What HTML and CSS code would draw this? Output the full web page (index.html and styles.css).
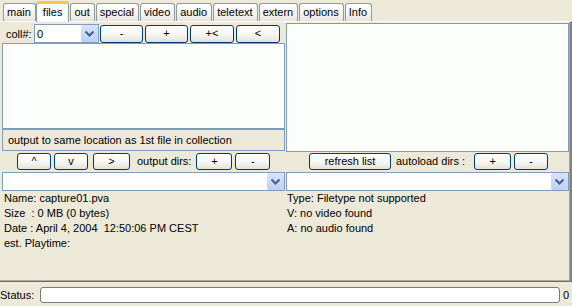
FILE: index.html
```html
<!DOCTYPE html>
<html>
<head>
<link rel="stylesheet" href="styles.css">
</head>
<body>
<div class="tabs">
	<span class="tab">main</span>
	<span class="tab active">files</span>
	<span class="tab">out</span>
	<span class="tab">special</span>
	<span class="tab">video</span>
	<span class="tab">audio</span>
	<span class="tab">teletext</span>
	<span class="tab">extern</span>
	<span class="tab">options</span>
	<span class="tab">Info</span>
</div>
<div class="panel">
	<div class="grid">
		<div class="left-top">
			<div class="toolbar">
				<span class="coll">coll#:</span>
				<div class="combo combo-coll">
					<span class="val">0</span>
					<span class="drop"><svg width="17" height="17" viewBox="0 0 17 17"><path d="M4.5 6.5 L8.5 10.5 L12.5 6.5" fill="none" stroke="#4D6185" stroke-width="2.2"/></svg></span>
				</div>
				<button class="btn b-min">-</button>
				<button class="btn b-plus">+</button>
				<button class="btn b-pl">+&lt;</button>
				<button class="btn b-lt">&lt;</button>
			</div>
			<div class="list list-left"></div>
			<div class="note">output to same location as 1st file in collection</div>
		</div>
		<div class="list list-right"></div>

		<div class="btnrow row-left">
			<button class="btn b-up">^</button>
			<button class="btn b-down">v</button>
			<button class="btn b-gt">&gt;</button>
			<span class="txt t-out">output dirs:</span>
			<button class="btn b-add">+</button>
			<button class="btn b-del">-</button>
		</div>
		<div class="btnrow row-right">
			<button class="btn b-refresh">refresh list</button>
			<span class="txt t-auto">autoload dirs :</span>
			<button class="btn b-add2">+</button>
			<button class="btn b-del2">-</button>
		</div>

		<div class="combo">
			<span class="val"></span>
			<span class="drop"><svg width="17" height="17" viewBox="0 0 17 17"><path d="M4.5 6.5 L8.5 10.5 L12.5 6.5" fill="none" stroke="#4D6185" stroke-width="2.2"/></svg></span>
		</div>
		<div class="combo">
			<span class="val"></span>
			<span class="drop"><svg width="17" height="17" viewBox="0 0 17 17"><path d="M4.5 6.5 L8.5 10.5 L12.5 6.5" fill="none" stroke="#4D6185" stroke-width="2.2"/></svg></span>
		</div>

		<div class="info info-left">
			<div>Name: capture01.pva</div>
			<div>Size&nbsp; : 0 MB (0 bytes)</div>
			<div>Date : April 4, 2004&nbsp; 12:50:06 PM CEST</div>
			<div>est. Playtime:</div>
		</div>
		<div class="info info-right">
			<div>Type: Filetype not supported</div>
			<div>V: no video found</div>
			<div>A: no audio found</div>
		</div>
	</div>
</div>
<div class="status">
	<span class="status-lbl">Status:</span>
	<div class="status-box"></div>
	<span class="status-num">0</span>
</div>
</body>
</html>
```

FILE: styles.css
```css
body {
	margin: 0;
	width: 572px;
	height: 306px;
	background: #ECE9D8;
	font-family: "Liberation Sans", Arial, sans-serif;
	font-size: 11px;
	color: #000;
	overflow: hidden;
}
/* tab strip */
.tabs {
	display: flex;
	align-items: flex-end;
	height: 21px;
	padding-left: 3px;
}
.tab {
	box-sizing: border-box;
	height: 18px;
	padding: 0 4px 0 3px;
	margin-right: 1px;
	line-height: 17px;
	border: 1px solid #919B9C;
	border-bottom: none;
	border-radius: 3px 3px 0 0;
	background: linear-gradient(#FEFEFE, #F4F3EE 60%, #E6E4DA);
}
.tab.active {
	position: relative;
	z-index: 1;
	height: 21px;
	margin-bottom: -1px;
	padding: 0 6px;
	margin-left: -1px;
	line-height: 17px;
	border-top: 3px solid #FFC83C;
	background: #FCFCFE;
}
.panel {
	box-sizing: border-box;
	height: 261px;
	border-top: 1px solid #FFFFFF;
	border-right: 2px solid #808080;
	border-bottom: 1px solid #716F64;
	box-shadow: inset -1px 0 #ACA899, inset 0 -1px #ACA899;
	padding: 1px 0 0 2px;
}
.grid {
	display: grid;
	grid-template-columns: 283px 283px;
	grid-template-rows: 129px 20px 19px auto;
	column-gap: 1px;
}
.left-top {
	display: flex;
	flex-direction: column;
}
.toolbar {
	display: flex;
	align-items: center;
	height: 19px;
	margin-top: 1px;
}
.coll {
	width: 32px;
	padding-left: 4px;
	box-sizing: border-box;
}
.list {
	box-sizing: border-box;
	border: 1px solid #7F9DB9;
	background: #FCFEFC;
}
.list-left {
	height: 86px;
}
.note {
	box-sizing: border-box;
	height: 22px;
	border: 1px solid #7F9DB9;
	padding-left: 5px;
	line-height: 20px;
}
/* combos */
.combo {
	box-sizing: border-box;
	display: flex;
	align-items: center;
	height: 19px;
	border: 1px solid #7F9DB9;
	background: #FFFFFF;
}
.combo .val {
	flex: 1;
	padding-left: 2px;
}
.combo .drop {
	width: 17px;
	height: 17px;
	border-radius: 2px;
	background: linear-gradient(#D8E4FC, #BCCFF8);
}
.combo .drop svg {
	display: block;
}
.combo-coll {
	width: 65px;
	margin-right: 1px;
}
/* buttons */
.btn {
	box-sizing: border-box;
	height: 18px;
	padding: 0;
	border: 1px solid #003C74;
	border-radius: 3px;
	background: linear-gradient(#FFFFFF, #F4F4F0 60%, #E3E1D8);
	font-family: "Liberation Sans", Arial, sans-serif;
	font-size: 11px;
	color: #000;
	line-height: 15px;
}
.b-min, .b-plus { width: 43px; margin-right: 2px; }
.b-pl { width: 44px; margin-right: 2px; }
.b-lt { width: 44px; }

.btnrow {
	display: flex;
	align-items: flex-start;
	padding-top: 1px;
}
.btnrow .btn { height: 17px; }
.row-left { padding-left: 15px; }
.b-up, .b-down { width: 34px; margin-right: 3px; }
.b-gt { width: 37px; margin-left: 2px; }
.txt { line-height: 16px; }
.t-out { margin: 0 5px 0 7px; }
.b-add { width: 36px; margin-right: 3px; }
.b-del { width: 35px; }
.row-right { padding-left: 23px; }
.b-refresh { width: 82px; }
.t-auto { margin: 0 9px 0 5px; }
.b-add2 { width: 37px; margin-right: 3px; }
.b-del2 { width: 34px; }

.info {
	padding-top: 0;
	line-height: 15px;
}
.info-left { padding-left: 2px; }
.info-right { padding-left: 1px; }
/* status line */
.status {
	display: flex;
	align-items: center;
	height: 24px;
	padding-top: 1px;
	box-sizing: border-box;
}
.status-lbl {
	width: 40px;
}
.status-box {
	box-sizing: border-box;
	width: 520px;
	height: 16px;
	border: 1px solid #7A7A7A;
	border-radius: 3px;
	background: #FFFFFF;
}
.status-num {
	margin-left: 3px;
}
```
